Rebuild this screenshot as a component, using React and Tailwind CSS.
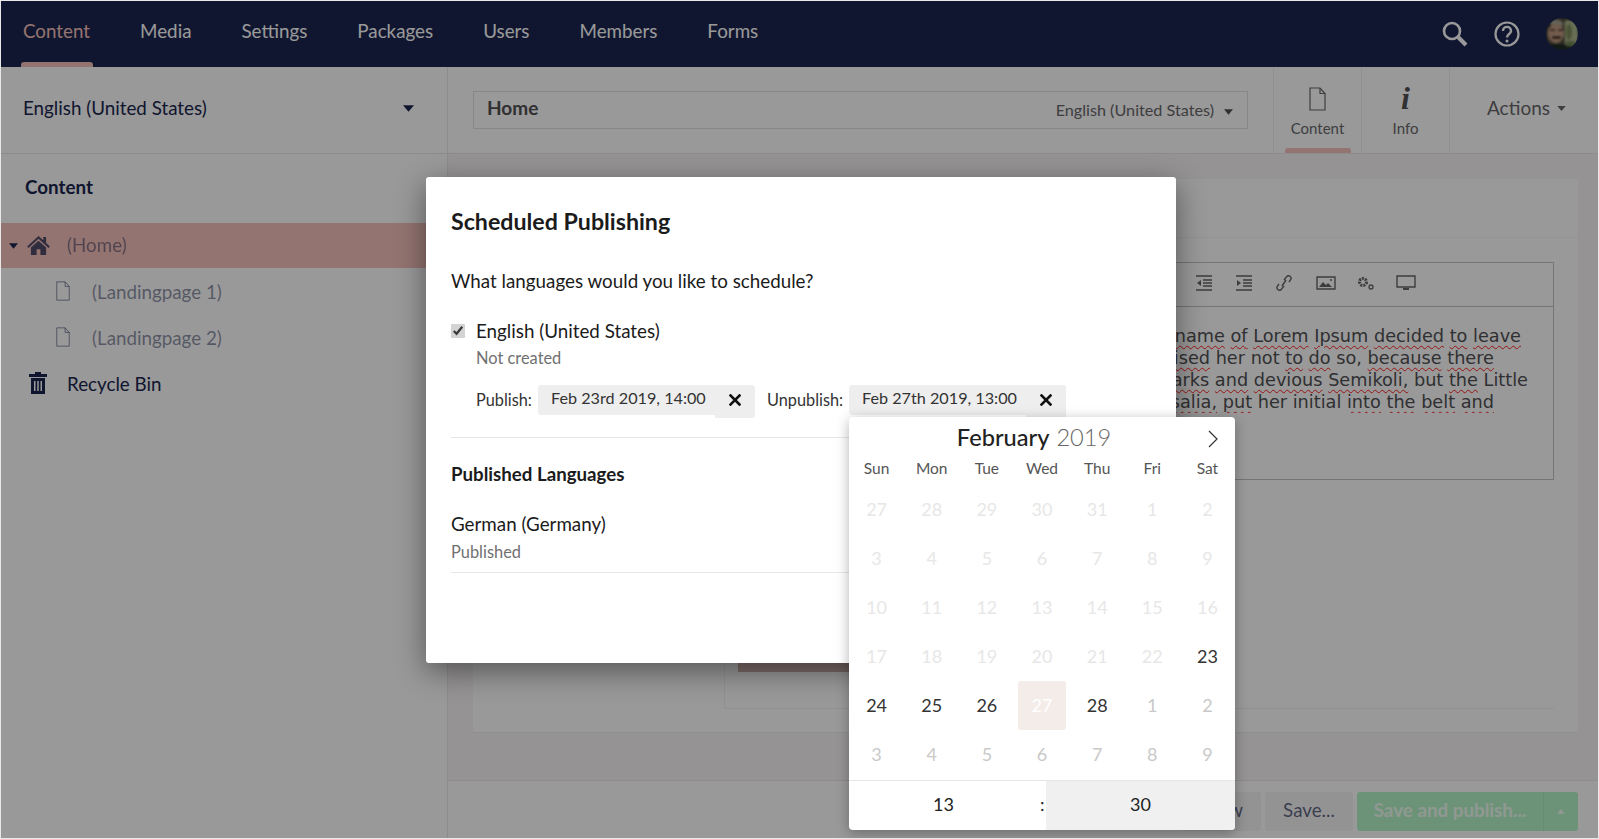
const navItems = ['Media', 'Settings', 'Packages', 'Users', 'Members', 'Forms'];
const weekdays = ['Sun', 'Mon', 'Tue', 'Wed', 'Thu', 'Fri', 'Sat'];

const disabledDays = [27, 28, 29, 30, 31, 1, 2, 3, 4, 5, 6, 7, 8, 9, 10, 11, 12, 13, 14, 15, 16, 17, 18, 19, 20, 21, 22];
const nextDays = [1, 2, 3, 4, 5, 6, 7, 8, 9];

// words in "plain" don't get the spellcheck squiggle
const editorLines = [
  { text: 'A small line of blind text by the name of Lorem Ipsum decided to leave', plain: [], cls: 'pr-[32px]' },
  { text: 'The Big Oxmox advised her not to do so, because there', plain: ['her', 'not', 'so,'], cls: 'pr-[59px]' },
  { text: 'wild Question Marks and devious Semikoli, but the Little', plain: ['but', 'Little'], cls: 'pr-[25px]' },
  { text: 'her seven versalia, put her initial into the belt and', plain: ['her', 'initial'], cls: 'pr-[59px]' },
];

function Caret({ className }) {
  return (
    <svg viewBox="0 0 10 6" className={className}>
      <path d="M0 0h10L5 6z" fill="currentColor" />
    </svg>
  );
}

function DocIcon({ className }) {
  return (
    <svg viewBox="0 0 17 24" fill="none" stroke="currentColor" strokeWidth="1.2" className={className}>
      <path d="M1 1h10l5 5.5V23H1z" />
      <path d="M11 1v5.500h5" />
    </svg>
  );
}

function Squiggly({ text, plain }) {
  const words = text.split(' ');
  return words.map((w, i) => (
    <span key={i}>
      <span className={plain.includes(w) ? '' : 'underline decoration-wavy decoration-[#ff2020] decoration-1 underline-offset-[3px]'}>{w}</span>
      {i < words.length - 1 ? ' ' : ''}
    </span>
  ));
}

function EditorIcon({ children, className = '' }) {
  return (
    <svg viewBox="0 0 20 16" fill="none" stroke="#666666" strokeWidth="1.4" className={`w-[20px] h-[16px] ${className}`}>
      {children}
    </svg>
  );
}

function Toolbar() {
  return (
    <div className="h-[44px] border-b border-[#c4c4c4] flex items-center justify-end pr-[137px] pb-[3px] gap-[20px]">
      <EditorIcon>
        <path d="M2 1h16M9 5h9M9 8h9M9 11h9M2 15h16" />
        <path d="M7 5v6L3 8z" fill="#666666" stroke="none" />
      </EditorIcon>
      <EditorIcon>
        <path d="M2 1h16M9 5h9M9 8h9M9 11h9M2 15h16" />
        <path d="M3 5v6l4-3z" fill="#666666" stroke="none" />
      </EditorIcon>
      <EditorIcon className="mr-[2px]">
        <path d="M8 11l4-6M5 9l-1.500 2.200a2.500 2.500 0 0 0 4 3L10 11M15 7l1.500-2.200a2.500 2.500 0 0 0-4-3L10 5" />
      </EditorIcon>
      <EditorIcon>
        <path d="M1 2h18v12H1z" />
        <path d="M3 12l4-5 3 3 2-2 4 4z" fill="#666666" stroke="none" />
        <circle cx="15" cy="5" r="1" fill="#666666" stroke="none" />
      </EditorIcon>
      <EditorIcon>
        <circle cx="7" cy="7" r="3.500" strokeWidth="3" strokeDasharray="2 1" />
        <circle cx="15" cy="12" r="2" strokeWidth="1.300" />
      </EditorIcon>
      <EditorIcon>
        <path d="M1 1h18v11H1z" />
        <path d="M7 14h6" strokeWidth="2" />
      </EditorIcon>
    </div>
  );
}

function DateChip({ value, children }) {
  return (
    <div className="relative flex w-[217px] h-[33px] items-start">
      <div className="w-[177px] h-[30px] bg-[#eeeeee] rounded-l-[3px] pl-[13px] text-[16.200px] leading-[25px] text-[#333333]">
        {value}
      </div>
      <div className="w-[40px] h-[33px] bg-[#eeeeee] rounded-r-[3px] flex items-center justify-center pb-[3px]">
        <svg viewBox="0 0 12 12" className="w-[12px] h-[12px]" stroke="#111111" strokeWidth="2.600" strokeLinecap="square">
          <path d="M1.500 1.500l9 9M10.500 1.500l-9 9" />
        </svg>
      </div>
      {children}
    </div>
  );
}

function Calendar() {
  return (
    <div className="absolute left-0 top-[32px] z-10 w-[386px] h-[413px] bg-white rounded-[4px] shadow-[0_3px_13px_rgba(0,0,0,0.3)] flex flex-col">
      <div className="relative h-[40px] flex items-center justify-center pr-[16px] pt-[1px] text-[23.600px] text-[#222222]">
        <span className="font-medium">February</span>
        <span className="ml-[7px] font-light text-[#666666]">2019</span>
        <svg viewBox="0 0 10 18" fill="none" stroke="#333333" strokeWidth="1.200" className="absolute right-[17px] top-[13px] w-[10px] h-[18px]">
          <path d="M1 1l8 8-8 8" />
        </svg>
      </div>
      <div className="grid grid-cols-7 h-[23px] items-center text-center text-[15.500px] text-[#555555]">
        {weekdays.map((d) => (
          <div key={d}>{d}</div>
        ))}
      </div>
      <div className="grid grid-cols-7 auto-rows-[49px] mt-[5px] mb-[1px] text-center text-[18px] leading-[48px] h-[294px]">
        {disabledDays.map((d, i) => (
          <div key={i} className="text-[#e7e7e7]">{d}</div>
        ))}
        <div className="text-[#333333]">23</div>
        <div className="text-[#333333]">24</div>
        <div className="text-[#333333]">25</div>
        <div className="text-[#333333]">26</div>
        <div className="mx-auto w-[48px] bg-[#f3ece8] rounded-[3px] text-white">27</div>
        <div className="text-[#333333]">28</div>
        {nextDays.map((d, i) => (
          <div key={i} className="text-[#c9c9c9]">{d}</div>
        ))}
      </div>
      <div className="flex-1 border-t border-[#e6e6e6] flex text-[18px] text-[#222222] overflow-hidden rounded-b-[4px]">
        <div className="flex-1 flex items-center justify-center pb-[2px]">13</div>
        <div className="w-[197px] flex items-center">
          <span className="w-[8px] ml-[2px] -mr-[2px] pb-[2px]">:</span>
          <div className="flex-1 h-full bg-[#f0f0f0] flex items-center justify-center pb-[2px]">30</div>
        </div>
      </div>
    </div>
  );
}

function Modal() {
  return (
    <div className="absolute left-[425px] top-[176px] w-[750px] h-[486px] bg-white rounded-[3px] shadow-[0_8px_30px_rgba(0,0,0,0.45)] pl-[25px] pr-[24px] text-[#1b1b1b]">
      <h2 className="mt-[30px] text-[23.200px] leading-[28px] font-bold text-[#1b1b1b]">Scheduled Publishing</h2>
      <p className="mt-[32px] text-[18.800px] leading-[28px]">What languages would you like to schedule?</p>
      <div className="mt-[22px] flex items-start">
        <input type="checkbox" defaultChecked readOnly className="mt-[7px] w-[14px] h-[14px] accent-[#d4d4d4]" />
        <div className="ml-[11px] text-[18.800px] leading-[28px]">English (United States)</div>
      </div>
      <div className="ml-[25px] mt-[1px] text-[16.400px] leading-[24px] text-[#707070]">Not created</div>
      <div className="ml-[25px] mt-[15px] flex items-start pb-[19px] text-[16.300px]">
        <span className="w-[62px] leading-[30px] text-[#333333]">Publish:</span>
        <DateChip value="Feb 23rd 2019, 14:00" />
        <span className="ml-[12px] w-[82px] leading-[30px] text-[#333333]">Unpublish:</span>
        <DateChip value="Feb 27th 2019, 13:00">
          <Calendar />
        </DateChip>
      </div>
      <div className="border-t border-[#e6e6e6] pt-[22px]">
        <h3 className="text-[18.700px] leading-[28px] font-bold text-[#1b1b1b]">Published Languages</h3>
        <div className="mt-[22px] text-[18.800px] leading-[28px]">German (Germany)</div>
        <div className="mt-[2px] text-[16.400px] leading-[24px] text-[#707070] pb-[8px] border-b border-[#e6e6e6]">Published</div>
      </div>
    </div>
  );
}

function Header() {
  return (
    <header className="h-[66px] bg-[#1b264f] flex items-center shrink-0 pl-[22px] pr-[20px] text-[18.800px]">
      <nav className="flex gap-[50px] self-stretch">
        <a className="relative flex items-center pb-[6px] text-[#f5c1bc]">
          Content
          <span className="absolute -left-[2px] -right-[3px] bottom-0 h-[5px] bg-[#f5c1bc] rounded-t-[3px]" />
        </a>
        {navItems.map((n) => (
          <a key={n} className="flex items-center pb-[6px] text-white">{n}</a>
        ))}
      </nav>
      <div className="ml-auto flex items-center">
        <svg viewBox="0 0 26 26" fill="none" stroke="#ffffff" className="w-[26px] h-[26px]">
          <circle cx="10" cy="10" r="8" strokeWidth="2.600" />
          <path d="M16 16l8 8" strokeWidth="4" />
        </svg>
        <svg viewBox="0 0 26 26" fill="none" stroke="#ffffff" className="ml-[26px] w-[26px] h-[26px]">
          <circle cx="13" cy="13" r="11.500" strokeWidth="2.200" />
          <path d="M9 10c0-5.500 8-5.500 8 0 0 3-4 3-4 6.500" strokeWidth="2.400" />
          <circle cx="13" cy="20" r="1.500" fill="#ffffff" stroke="none" />
        </svg>
        <svg viewBox="0 0 32 32" className="ml-[26px] w-[32px] h-[32px]">
          <defs>
            <clipPath id="av"><circle cx="16" cy="16" r="16" /></clipPath>
            <filter id="soft"><feGaussianBlur stdDeviation="0.800" /></filter>
          </defs>
          <g clipPath="url(#av)">
            <g filter="url(#soft)">
              <rect width="32" height="32" fill="#4a4838" />
              <rect x="19" y="3" width="13" height="24" fill="#aeb88a" />
              <ellipse cx="23" cy="14" rx="3" ry="8" fill="#7d8a5c" />
              <ellipse cx="10" cy="15" rx="8" ry="10" fill="#c09a82" />
              <path d="M1 9c3-9 15-10 17-1-5-2-11-2-17 1z" fill="#a8a392" />
              <path d="M4 11h5v2H4zM12 11h5v2h-5z" fill="#2e251c" />
              <path d="M6 18h9v3H6z" fill="#2a1c14" />
              <path d="M0 1h5v8H0z" fill="#1e1c18" />
              <path d="M0 26h32v6H0z" fill="#1c2a28" />
              <path d="M20 23h9v5h-9z" fill="#6e8556" />
            </g>
          </g>
        </svg>
      </div>
    </header>
  );
}

function Sidebar() {
  return (
    <aside className="w-[447px] shrink-0 border-r border-[#e9e9eb] flex flex-col text-[18.800px] text-[#1b264f]">
      <div className="h-[87px] border-b border-[#e9e9eb] flex items-center justify-between pl-[22px] pr-[33px] pb-[4px]">
        <span>English (United States)</span>
        <Caret className="w-[11px] h-[7px]" />
      </div>
      <div className="h-[69px] flex items-center pl-[24px] pb-[2px] font-bold">Content</div>
      <div className="h-[45px] bg-[#f5c1bc] flex items-center pl-[8px]">
        <Caret className="w-[9px] h-[6px]" />
        <svg viewBox="0 0 24 20" className="ml-[9px] w-[23px] h-[19px]" fill="#1b264f" opacity="0.75">
          <path d="M12 0L0 11l1.500 1.500L12 3l10.500 9.500L24 11l-4-3.700V1h-3v3.500z" />
          <path d="M12 5L4 12v8h6v-6h4v6h6v-8z" />
        </svg>
        <span className="ml-[17px] opacity-50">(Home)</span>
      </div>
      <div className="h-[46px] flex items-center pl-[54px] text-[#1b264f]/50">
        <DocIcon className="w-[16px] h-[20px]" />
        <span className="ml-[21px] pt-[3px]">(Landingpage 1)</span>
      </div>
      <div className="h-[46px] flex items-center pl-[54px] text-[#1b264f]/50">
        <DocIcon className="w-[16px] h-[20px]" />
        <span className="ml-[21px] pt-[2px]">(Landingpage 2)</span>
      </div>
      <div className="h-[46px] flex items-center pl-[28px]">
        <svg viewBox="0 0 18 22" className="w-[18px] h-[22px]" fill="#1b264f">
          <path d="M6 0h6v2h6v3H0V2h6z" />
          <path fillRule="evenodd" d="M2 6h14v16H2zM5 9v10h1.500V9zM8.250 9v10h1.500V9zM11.500 9v10H13V9z" />
        </svg>
        <span className="ml-[20px] pt-[3px]">Recycle Bin</span>
      </div>
    </aside>
  );
}

function EditorHeader() {
  return (
    <div className="h-[87px] bg-white border-b border-[#e9e9eb] flex items-center shrink-0 pl-[25px] text-[#515054]">
      <div className="w-[775px] h-[38px] border border-[#e1e1e1] flex items-center pl-[13px] pr-[14px]">
        <span className="text-[19px] font-bold pb-[3px]">Home</span>
        <span className="ml-auto text-[16.200px] text-[#68676b]">English (United States)</span>
        <Caret className="ml-[10px] mt-[3px] w-[9px] h-[6px]" />
      </div>
      <div className="ml-[25px] self-stretch w-[89px] border-x border-[#f2f2f2] flex flex-col items-center relative text-[#68676b]">
        <DocIcon className="mt-[20px] w-[19px] h-[24px]" />
        <span className="mt-[7px] text-[15px] leading-[20px]">Content</span>
        <span className="absolute bottom-0 left-[11px] w-[66px] h-[5px] bg-[#f5c1bc] rounded-t-[3px]" />
      </div>
      <div className="self-stretch w-[88px] border-r border-[#f2f2f2] flex flex-col items-center text-[#68676b]">
        <span className="mt-[16px] h-[31px] text-[32px] leading-[31px] font-bold italic font-['Liberation_Serif',serif] text-[#515054]">i</span>
        <span className="mt-[4px] text-[15px] leading-[20px]">Info</span>
      </div>
      <div className="ml-[37px] flex items-center text-[19px] text-[#68676b] mb-[4px]">
        Actions
        <Caret className="ml-[7px] w-[9px] h-[5px]" />
      </div>
    </div>
  );
}

function Main() {
  return (
    <main className="flex-1 min-w-0 flex flex-col">
      <EditorHeader />
      <div className="flex-1 bg-[#f8f6f5] pl-[25px] pr-[20px] pt-[25px] flex flex-col">
        <div className="h-[554px] bg-white flex flex-col border-b border-[#eeeeee]">
          <div className="h-[59px] border-b border-[#f6f6f6] shrink-0" />
          <div className="ml-[251px] mr-[24px] mt-[24px] h-[447px] border-l border-b border-[#f2f2f2] flex flex-col">
            <div className="ml-[13px] h-[218px] border border-[#c4c4c4] flex flex-col">
              <Toolbar />
              <div className="pt-[18px] font-['DejaVu_Sans',sans-serif] text-[17.700px] leading-[22px] text-[#515054] overflow-hidden">
                {editorLines.map((l) => (
                  <div key={l.text} className={`whitespace-nowrap text-right ${l.cls}`}>
                    <Squiggly text={l.text} plain={l.plain} />
                  </div>
                ))}
              </div>
            </div>
            <div className="ml-[13px] mt-auto mb-[36px] w-[150px] h-[30px] bg-[#d0b2ad]" />
          </div>
        </div>
      </div>
      <div className="h-[58px] bg-white border-t border-[#e9e9eb] flex items-center justify-end gap-[4px] pr-[20px] pt-[3px] text-[18.800px] shrink-0">
        <div className="w-[80px] h-[39px] bg-[#f7f6f6] rounded-[3px] text-[#1b264f]/70 flex items-center justify-end pr-[18px] pb-[2px]">Preview</div>
        <div className="w-[88px] h-[39px] bg-[#f7f6f6] rounded-[3px] text-[#1b264f]/70 flex items-center justify-center pb-[2px]">Save...</div>
        <div className="w-[221px] h-[39px] bg-[#b5f5c9] rounded-[3px] flex text-white/80 font-bold">
          <div className="flex-1 flex items-center justify-center pb-[2px]">Save and publish...</div>
          <div className="w-[35px] border-l border-[#aae9bf] flex items-center justify-center">
            <Caret className="rotate-180 w-[8px] h-[5px]" />
          </div>
        </div>
      </div>
    </main>
  );
}

export default function App() {
  return (
    <div className="relative w-[1599px] h-[839px] overflow-hidden border border-[#e8e8e8] bg-white font-['Lato',sans-serif] flex flex-col">
      <Header />
      <div className="flex-1 min-h-0 flex">
        <Sidebar />
        <Main />
      </div>
      <div className="absolute inset-0 bg-black/40" />
      <Modal />
    </div>
  );
}
